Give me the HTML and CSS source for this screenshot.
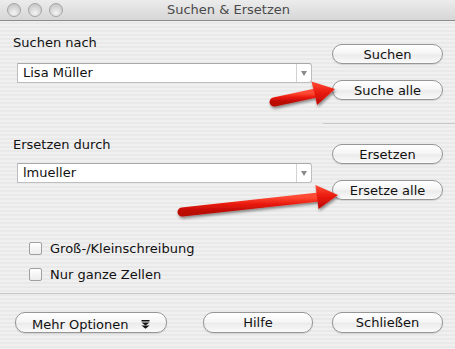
FILE: index.html
```html
<!DOCTYPE html>
<html lang="de">
<head>
    <meta charset="UTF-8">
    <title>Suchen &amp; Ersetzen</title>
    <link rel="stylesheet" href="styles.css">
</head>
<body>

<div class="window">
    <!-- Title bar -->
    <div class="titlebar">
        <div class="lights"><span></span><span></span><span></span></div>
        <div class="title">Suchen &amp; Ersetzen</div>
    </div>

    <div class="panel">
        <!-- Search group -->
        <div class="group first">
            <div class="fields">
                <div class="caption">Suchen nach</div>
                <div class="combo">
                    <span class="value">Lisa Müller</span>
                    <span class="drop"></span>
                </div>
            </div>
            <div class="actions">
                <button class="btn">Suchen</button>
                <button class="btn">Suche alle</button>
            </div>
        </div>

        <div class="rule short"></div>

        <!-- Replace group -->
        <div class="group second">
            <div class="fields">
                <div class="caption">Ersetzen durch</div>
                <div class="combo">
                    <span class="value">lmueller</span>
                    <span class="drop"></span>
                </div>
            </div>
            <div class="actions">
                <button class="btn">Ersetzen</button>
                <button class="btn">Ersetze alle</button>
            </div>
        </div>

        <!-- Options -->
        <div class="options">
            <label class="check"><span class="box"></span>Groß-/Kleinschreibung</label>
            <label class="check"><span class="box"></span>Nur ganze Zellen</label>
        </div>

        <div class="rule full"></div>

        <!-- Bottom buttons -->
        <div class="footer">
            <button class="btn more">Mehr Optionen
                <svg class="more-icon" width="9" height="9" viewBox="0 0 9 9">
                    <rect x="0.5" y="0" width="8" height="1.5" fill="#111"/>
                    <polygon points="0.5,2.5 8.5,2.5 4.5,5.5" fill="#111"/>
                    <polygon points="0.5,5.5 8.5,5.5 4.5,8.8" fill="#111"/>
                </svg>
            </button>
            <button class="btn help">Hilfe</button>
            <button class="btn close">Schließen</button>
        </div>
    </div>

    <!-- Annotation arrows drawn over the dialog -->
    <svg class="arrows" width="455" height="349" viewBox="0 0 455 349">
        <defs>
            <linearGradient id="red" x1="0" y1="0" x2="0" y2="1">
                <stop offset="0" stop-color="#ff4b36"/>
                <stop offset="0.5" stop-color="#e8180c"/>
                <stop offset="1" stop-color="#b80a04"/>
            </linearGradient>
            <filter id="shadow" x="-20%" y="-50%" width="140%" height="200%">
                <feDropShadow dx="1" dy="2" stdDeviation="1.5" flood-color="#000" flood-opacity="0.45"/>
            </filter>
        </defs>
        <g filter="url(#shadow)">
            <line x1="274" y1="102" x2="316" y2="93" stroke="url(#red)" stroke-width="9" stroke-linecap="round"/>
            <polygon points="311.4,81.4 335,89 317,105 314.5,93" fill="url(#red)"/>
        </g>
        <g filter="url(#shadow)">
            <line x1="182" y1="212" x2="319" y2="197" stroke="url(#red)" stroke-width="9" stroke-linecap="round"/>
            <polygon points="315.4,185 338,195 318.5,209 317,197" fill="url(#red)"/>
        </g>
    </svg>
</div>

</body>
</html>
```

FILE: styles.css
```css
body {
    margin: 0;
    font-family: "DejaVu Sans", "Liberation Sans", sans-serif;
    font-size: 13px;
    color: #111;
}

.window {
    position: relative;
    width: 455px;
    height: 349px;
    overflow: hidden;
    background: repeating-linear-gradient(#f0f0f0 0 2px, #e9e9e9 2px 4px);
}

/* Title bar */
.titlebar {
    position: relative;
    height: 20px;
    border-bottom: 1px solid #8c8c8c;
    background: linear-gradient(#ececec, #d6d6d6);
}

.lights {
    position: absolute;
    left: 7px;
    top: 3px;
    display: flex;
    gap: 7px;
}

.lights span {
    width: 12px;
    height: 12px;
    border-radius: 50%;
    border: 1px solid #a4a4a4;
    background: radial-gradient(circle at 50% 75%, #f4f4f4, #d2d2d2 60%, #bdbdbd);
}

.title {
    text-align: center;
    line-height: 20px;
    color: #4a4a4a;
    font-size: 13px;
    padding-left: 2px;
}

/* Panel */
.panel {
    padding: 0 12px 0 13px;
}

.group {
    display: flex;
    justify-content: space-between;
}

.fields {
    width: 299px;
}

.caption {
    line-height: 16px;
}

.combo {
    display: flex;
    height: 18px;
    margin-left: 4px;
    border: 1px solid #bdbdbd;
    border-top-color: #a9a9a9;
    border-radius: 0 3px 3px 0;
    background: #fff;
}

.combo .value {
    flex: 1;
    padding-left: 5px;
    line-height: 18px;
}

.combo .drop {
    position: relative;
    width: 14px;
    border-left: 1px solid #d2d2d2;
}

.combo .drop::after {
    content: "";
    position: absolute;
    left: 4px;
    top: 7px;
    border-left: 3px solid transparent;
    border-right: 3px solid transparent;
    border-top: 5px solid #8a8a8a;
}

.first .fields { padding-top: 14px; }
.first .combo { margin-top: 12px; }
.first .actions { padding-top: 23px; }

.second .fields { padding-top: 13px; }
.second .combo { margin-top: 10px; }
.second .actions { padding-top: 20px; }

.actions {
    display: flex;
    flex-direction: column;
    gap: 16px;
    width: 111px;
}

/* Aqua style push button */
.btn {
    font-family: inherit;
    font-size: 13px;
    color: #111;
    height: 20px;
    padding: 0;
    border: 1px solid #969696;
    border-radius: 10px;
    background: linear-gradient(#ffffff, #f6f6f6 45%, #ebebeb 55%, #fafafa);
    box-shadow: 0 1px 1px rgba(0, 0, 0, 0.12);
}

.rule {
    height: 1px;
    background: #c8c8c8;
}

.rule.short {
    margin: 23px -12px 0 310px;
}

.rule.full {
    margin: 11px -12px 0 -13px;
}

/* Check boxes */
.options {
    display: flex;
    flex-direction: column;
    gap: 10px;
    padding: 40px 0 0 16px;
}

.check {
    display: flex;
    align-items: center;
    height: 16px;
}

.check .box {
    width: 11px;
    height: 11px;
    margin-right: 8px;
    border: 1px solid #a0a0a0;
    border-radius: 2px;
    background: linear-gradient(#ffffff, #ececec);
}

/* Footer */
.footer {
    display: flex;
    padding-top: 18px;
    margin-left: 2px;
}

.footer .btn {
    height: 21px;
}

.more {
    width: 152px;
    padding-top: 4px;
    text-align: left;
    padding-left: 16px;
}

.more-icon {
    margin-left: 8px;
    vertical-align: 0;
}

.help {
    width: 110px;
    margin-left: 36px;
}

.close {
    width: 111px;
    margin-left: 19px;
}

.arrows {
    position: absolute;
    left: 0;
    top: 0;
    pointer-events: none;
}
```
